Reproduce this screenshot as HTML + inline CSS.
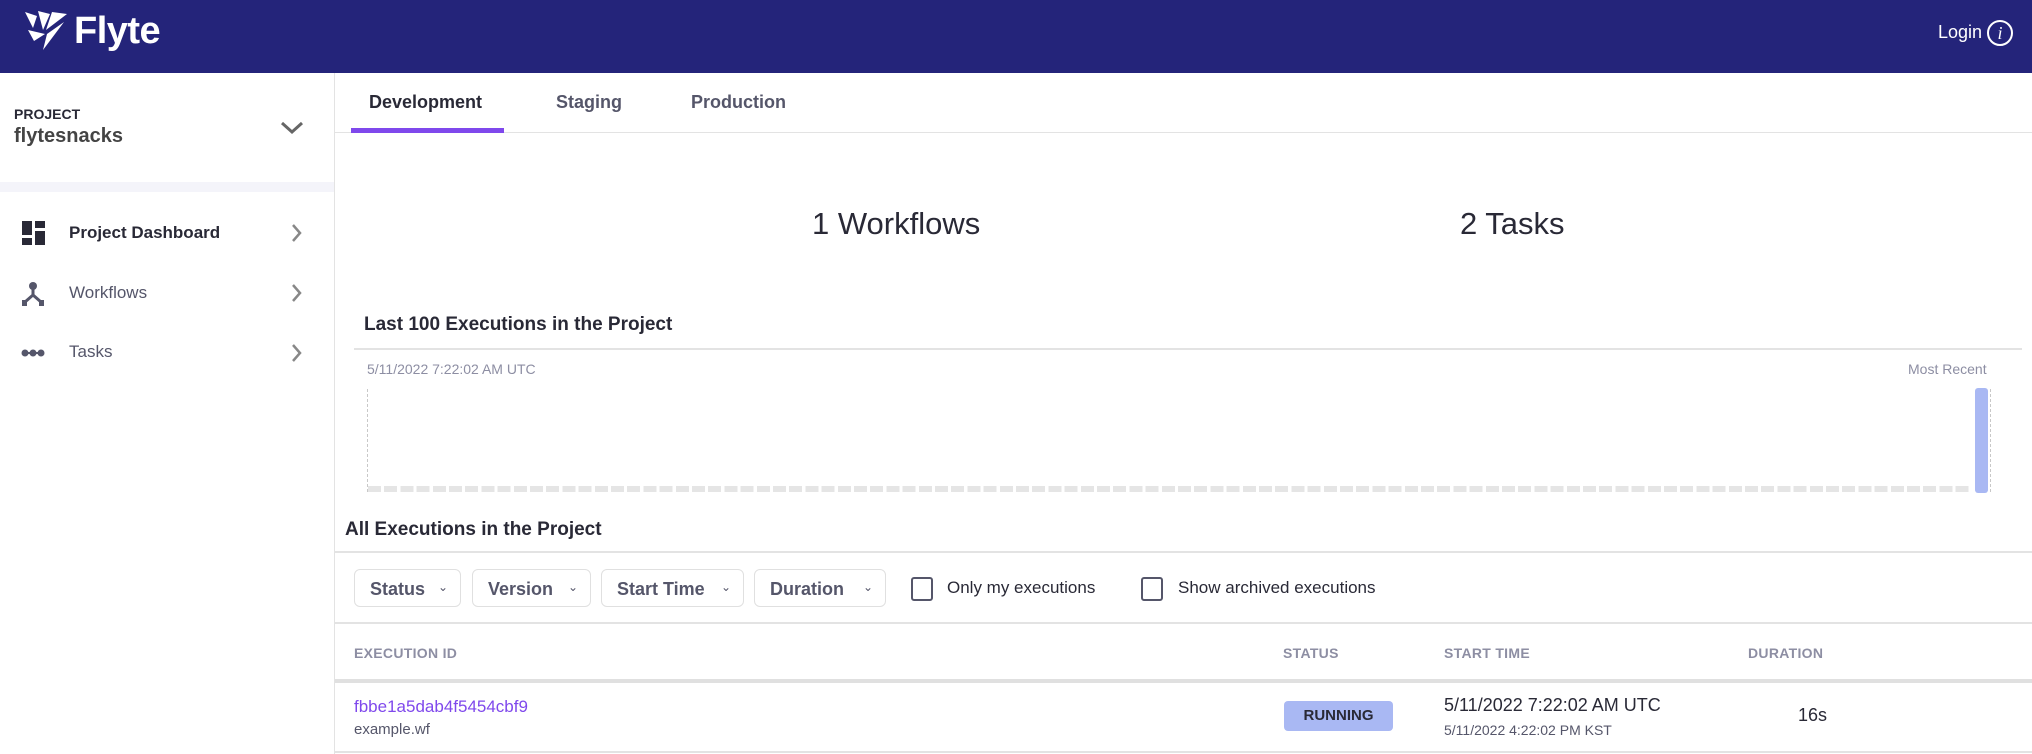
<!DOCTYPE html>
<html><head><meta charset="utf-8"><style>
*{margin:0;padding:0;box-sizing:border-box}
body{width:2032px;height:754px;overflow:hidden;background:#fff;font-family:"Liberation Sans",sans-serif;position:relative;color:#292936}
.a{position:absolute;white-space:nowrap}
.hl{position:absolute;height:2px;background:#e3e3e3}
.flt{position:absolute;top:569px;height:38px;border:1px solid #e0e0e0;border-radius:6px;font-size:18px;font-weight:bold;color:#55566a;padding:9px 0 0 15px}
.flt span{position:absolute;right:12px;top:10px;font-size:12px;font-weight:normal}
.cb{position:absolute;top:577px;width:22px;height:24px;border:2px solid #55566a;border-radius:3px}
.th{position:absolute;top:645px;font-size:14px;font-weight:bold;color:#8d8ea3;letter-spacing:.3px}
</style></head><body>
<div class="a" style="left:0;top:0;width:2032px;height:73px;background:#24247a"></div>
<svg class="a" style="left:24px;top:10px" width="44" height="40" viewBox="0 0 44 40"><path d="M1 2 L9 18 L13 6 Z M14 1 L19 20 L26 4 Z M28 2 L43 4 L22 20 Z M4 20 L21 24 L10 31 Z M23 24 L40 12 L19 40 Z" fill="#fff"/></svg>
<div class="a" style="left:74px;top:10px;font-size:38px;font-weight:bold;color:#fff;letter-spacing:-0.5px">Flyte</div>
<div class="a" style="left:1938px;top:22px;font-size:18px;color:#fff">Login</div>
<div class="a" style="left:1987px;top:20px;width:26px;height:26px;border:2px solid #fff;border-radius:50%;color:#fff;font-family:'Liberation Serif',serif;font-style:italic;font-size:18px;text-align:center;line-height:22px">i</div>

<div class="a" style="left:334px;top:73px;width:1px;height:681px;background:#e3e3e3"></div>
<div class="a" style="left:14px;top:106px;font-size:14px;font-weight:bold;color:#292936">PROJECT</div>
<div class="a" style="left:14px;top:125px;font-size:20px;font-weight:bold;color:#444">flytesnacks</div>
<svg class="a" style="left:280px;top:120px" width="24" height="16"><path d="M2 3 L12 12 L22 3" stroke="#666" stroke-width="3" fill="none"/></svg>
<div class="a" style="left:0;top:182px;width:334px;height:10px;background:#f4f4fa"></div>

<svg class="a" style="left:22px;top:221px" width="23" height="24"><rect x="0" y="0" width="10" height="14" fill="#292936"/><rect x="13" y="0" width="10" height="7" fill="#292936"/><rect x="13" y="10" width="10" height="14" fill="#292936"/><rect x="0" y="17" width="10" height="7" fill="#292936"/></svg>
<div class="a" style="left:69px;top:223px;font-size:17px;font-weight:bold;color:#292936">Project Dashboard</div>
<svg class="a" style="left:22px;top:282px" width="22" height="24"><circle cx="11" cy="4" r="4" fill="#55566a"/><path d="M11 6 V13 L3 20 M11 13 L19 20" stroke="#55566a" stroke-width="3" fill="none"/><rect x="0" y="18" width="5" height="6" fill="#55566a"/><rect x="17" y="18" width="5" height="6" fill="#55566a"/></svg>
<div class="a" style="left:69px;top:283px;font-size:17px;color:#55566a">Workflows</div>
<svg class="a" style="left:21px;top:348px" width="24" height="10"><line x1="2" y1="5" x2="22" y2="5" stroke="#55566a" stroke-width="2"/><circle cx="4" cy="5" r="3.5" fill="#55566a"/><circle cx="12" cy="5" r="3.5" fill="#55566a"/><circle cx="20" cy="5" r="3.5" fill="#55566a"/></svg>
<div class="a" style="left:69px;top:342px;font-size:17px;color:#55566a">Tasks</div>
<svg class="a" style="left:291px;top:223px" width="12" height="140"><path d="M2 2 L9 10 L2 18 M2 62 L9 70 L2 78 M2 122 L9 130 L2 138" stroke="#888" stroke-width="2.5" fill="none"/></svg>

<div class="a" style="left:369px;top:92px;font-size:18px;font-weight:bold;color:#292936">Development</div>
<div class="a" style="left:556px;top:92px;font-size:18px;font-weight:bold;color:#55566a">Staging</div>
<div class="a" style="left:691px;top:92px;font-size:18px;font-weight:bold;color:#55566a">Production</div>
<div class="a" style="left:335px;top:132px;width:1697px;height:1px;background:#e3e3e3"></div>
<div class="a" style="left:351px;top:128px;width:153px;height:5px;background:#7f48ec"></div>

<div class="a" style="left:812px;top:206px;font-size:31px;color:#292936">1 Workflows</div>
<div class="a" style="left:1460px;top:206px;font-size:31px;color:#292936">2 Tasks</div>

<div class="a" style="left:364px;top:314px;font-size:19px;font-weight:bold;color:#292936">Last 100 Executions in the Project</div>
<div class="hl" style="left:354px;top:348px;width:1668px"></div>
<div class="a" style="left:367px;top:361px;font-size:14px;color:#8d8ea3">5/11/2022 7:22:02 AM UTC</div>
<div class="a" style="left:1908px;top:361px;font-size:14px;color:#8d8ea3">Most Recent</div>
<div class="a" style="left:367px;top:389px;height:103px;border-left:1px dashed #c8c8c8"></div>
<div class="a" style="left:1990px;top:389px;height:103px;border-left:1px dashed #c8c8c8"></div>
<div class="a" style="left:368px;top:486px;width:1604px;height:6px;background:repeating-linear-gradient(90deg,#e5e5e5 0 13px,transparent 13px 16.2px)"></div>
<div class="a" style="left:1975px;top:388px;width:13px;height:105px;background:#a9b8f3;border-radius:3px"></div>

<div class="a" style="left:345px;top:519px;font-size:19px;font-weight:bold;color:#292936">All Executions in the Project</div>
<div class="hl" style="left:335px;top:551px;width:1697px"></div>
<div class="flt" style="left:354px;width:107px">Status<span>⌄</span></div>
<div class="flt" style="left:472px;width:119px">Version<span>⌄</span></div>
<div class="flt" style="left:601px;width:143px">Start Time<span>⌄</span></div>
<div class="flt" style="left:754px;width:132px">Duration<span>⌄</span></div>
<div class="cb" style="left:911px"></div>
<div class="a" style="left:947px;top:578px;font-size:17px;color:#292936">Only my executions</div>
<div class="cb" style="left:1141px"></div>
<div class="a" style="left:1178px;top:578px;font-size:17px;color:#292936">Show archived executions</div>
<div class="hl" style="left:335px;top:622px;width:1697px"></div>

<div class="th" style="left:354px">EXECUTION ID</div>
<div class="th" style="left:1283px">STATUS</div>
<div class="th" style="left:1444px">START TIME</div>
<div class="th" style="left:1748px">DURATION</div>
<div class="a" style="left:335px;top:679px;width:1697px;height:4px;background:#e0e0e0"></div>

<div class="a" style="left:354px;top:697px;font-size:17px;color:#7f48ec">fbbe1a5dab4f5454cbf9</div>
<div class="a" style="left:354px;top:721px;font-size:15px;color:#55566a">example.wf</div>
<div class="a" style="left:1284px;top:701px;width:109px;height:30px;background:#a9b8f3;border-radius:4px;font-size:15px;font-weight:bold;color:#292936;text-align:center;line-height:30px">RUNNING</div>
<div class="a" style="left:1444px;top:695px;font-size:18px;color:#292936">5/11/2022 7:22:02 AM UTC</div>
<div class="a" style="left:1444px;top:722px;font-size:14px;color:#55566a">5/11/2022 4:22:02 PM KST</div>
<div class="a" style="left:1798px;top:705px;font-size:18px;color:#292936">16s</div>
<div class="hl" style="left:335px;top:751px;width:1697px"></div>
</body></html>
